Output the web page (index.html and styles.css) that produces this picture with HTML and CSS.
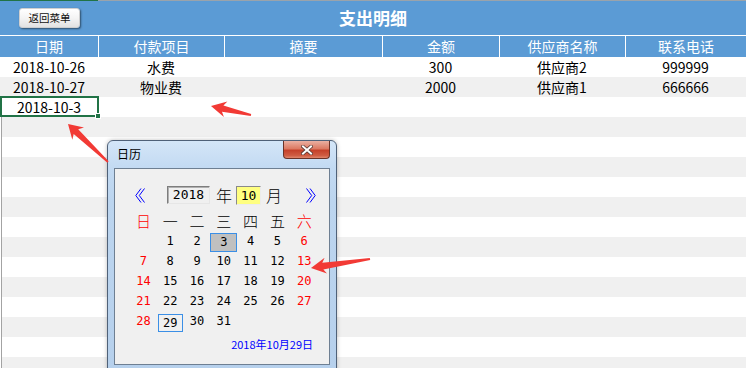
FILE: index.html
```html
<!DOCTYPE html>
<html lang="zh">
<head>
<meta charset="utf-8">
<title>支出明细</title>
<link rel="stylesheet" href="styles.css">
</head>
<body>
<div class="sheet">
  <div class="topline"><span class="topline-sel"></span></div>
  <div class="titlebar">
    <button class="back-btn">返回菜单</button>
    <h1 class="title">支出明细</h1>
    <span></span>
  </div>
  <div class="row head">
    <div>日期</div><div>付款项目</div><div>摘要</div><div>金额</div><div>供应商名称</div><div>联系电话</div>
  </div>
  <div class="row">
    <div>2018-10-26</div><div>水费</div><div></div><div>300</div><div>供应商2</div><div>999999</div>
  </div>
  <div class="row alt">
    <div>2018-10-27</div><div>物业费</div><div></div><div>2000</div><div>供应商1</div><div>666666</div>
  </div>
  <div class="row">
    <div class="sel">2018-10-3<span class="handle"></span></div><div></div><div></div><div></div><div></div><div></div>
  </div>
  <div class="blank alt"></div>
  <div class="blank"></div>
  <div class="blank alt"></div>
  <div class="blank"></div>
  <div class="blank alt"></div>
  <div class="blank"></div>
  <div class="blank alt"></div>
  <div class="blank"></div>
  <div class="blank alt"></div>
  <div class="blank"></div>
  <div class="blank alt"></div>
  <div class="blank"></div>
  <div class="blank alt"></div>
</div>

<div class="dialog">
  <div class="dlg-titlebar">
    <span class="dlg-title">日历</span>
    <span class="dlg-close">
      <svg width="12" height="10" viewBox="0 0 12 10">
        <path d="M2 1.5 L10 8.5 M10 1.5 L2 8.5" stroke="#5a3a34" stroke-width="3.6" stroke-linecap="square" fill="none"/>
        <path d="M2 1.5 L10 8.5 M10 1.5 L2 8.5" stroke="#ffffff" stroke-width="2" stroke-linecap="square" fill="none"/>
      </svg>
    </span>
  </div>
  <div class="dlg-panel">
    <div class="nav">
      <svg class="chev prev" width="10" height="15" viewBox="0 0 10 15">
        <polyline points="6,0.5 0.8,7.5 6,14.5" fill="none" stroke="#0000ff" stroke-width="1"/>
        <polyline points="9.5,0.5 4.3,7.5 9.5,14.5" fill="none" stroke="#0000ff" stroke-width="1"/>
      </svg>
      <span class="ybox">2018</span>
      <span class="unit u-year">年</span>
      <span class="mbox">10</span>
      <span class="unit u-month">月</span>
      <svg class="chev next" width="10" height="15" viewBox="0 0 10 15">
        <polyline points="0.5,0.5 5.7,7.5 0.5,14.5" fill="none" stroke="#0000ff" stroke-width="1"/>
        <polyline points="4,0.5 9.2,7.5 4,14.5" fill="none" stroke="#0000ff" stroke-width="1"/>
      </svg>
    </div>
    <div class="cal">
      <span class="wk red">日</span><span class="wk">一</span><span class="wk">二</span><span class="wk">三</span><span class="wk">四</span><span class="wk">五</span><span class="wk red">六</span>
      <span class="d"></span><span class="d">1</span><span class="d">2</span><span class="d picked">3</span><span class="d">4</span><span class="d">5</span><span class="d red">6</span>
      <span class="d red">7</span><span class="d">8</span><span class="d">9</span><span class="d">10</span><span class="d">11</span><span class="d">12</span><span class="d red">13</span>
      <span class="d red">14</span><span class="d">15</span><span class="d">16</span><span class="d">17</span><span class="d">18</span><span class="d">19</span><span class="d red">20</span>
      <span class="d red">21</span><span class="d">22</span><span class="d">23</span><span class="d">24</span><span class="d">25</span><span class="d">26</span><span class="d red">27</span>
      <span class="d red">28</span><span class="d today-box">29</span><span class="d">30</span><span class="d">31</span>
    </div>
    <div class="today">2018年10月29日</div>
  </div>
</div>

<svg class="arrows" width="746" height="368" viewBox="0 0 746 368">
  <polygon fill="#f23a35" points="68,124 84.0,127.5 78.2,129.3 108.6,161.3 107.4,162.7 73.7,133.9 72.3,139.8"/>
  <polygon fill="#f23a35" points="211,106 227.4,101.5 223.4,105.5 251.2,114.1 250.8,115.9 222.0,111.8 223.9,117.1"/>
  <polygon fill="#f23a35" points="311,268 327.0,273.6 323.4,269.6 370.2,260.0 369.8,258.0 322.3,262.7 324.6,257.8"/>
</svg>
</body>
</html>
```

FILE: styles.css
```css
* {
  box-sizing: border-box;
  margin: 0;
  padding: 0;
}

html,
body {
  width: 746px;
  height: 368px;
  overflow: hidden;
  background: #ffffff;
}

body {
  position: relative;
  font-family: "Noto Sans CJK SC", "Noto Sans", sans-serif;
  color: #000;
}

/* ---------- sheet ---------- */
.topline {
  display: flex;
  height: 1px;
  background: #9aa3ab;
}

.topline-sel {
  width: 98px;
  background: #217346;
}

.titlebar {
  display: grid;
  grid-template-columns: 1fr auto 1fr;
  align-items: center;
  height: 35px;
  background: #5b9bd5;
  border-bottom: 1px solid #ffffff;
}

.back-btn {
  justify-self: start;
  margin-left: 19px;
  width: 61px;
  height: 20px;
  font-family: "Noto Sans CJK SC", sans-serif;
  font-size: 10.5px;
  line-height: 18px;
  color: #111;
  background: linear-gradient(#ffffff, #f4f4f4 50%, #e2e2e2);
  border: 1px solid #cfcfcf;
  border-radius: 3px;
  box-shadow: 1px 1px 2px rgba(0, 0, 0, 0.5);
}

.title {
  font-size: 17px;
  font-weight: bold;
  line-height: 22px;
  color: #ffffff;
}

.row {
  display: grid;
  grid-template-columns: 98px 126px 158px 117px 126px 1fr;
  height: 20px;
}

.row > div {
  text-align: center;
  font-size: 14px;
  line-height: 20px;
  white-space: nowrap;
}

.head {
  height: 21px;
  background: #5b9bd5;
}

.head > div {
  color: #ffffff;
  line-height: 21px;
}

.head > div + div {
  border-left: 1px solid #ffffff;
}

.alt {
  background: #f0f0f0;
}

.blank {
  height: 20px;
  margin-left: 1px;
  border-left: 1px solid #a3a3a3;
}

.sel {
  position: relative;
}

.sel::before {
  content: "";
  position: absolute;
  top: -1px;
  left: 0;
  right: -1px;
  bottom: 0;
  border: 2px solid #217346;
}

.handle {
  position: absolute;
  right: -3px;
  bottom: -2px;
  width: 6px;
  height: 6px;
  background: #217346;
  border: 1px solid #ffffff;
}

/* ---------- calendar dialog ---------- */
.dialog {
  position: absolute;
  left: 107px;
  top: 140px;
  width: 230px;
  height: 240px;
  padding: 0 6px;
  border: 1px solid #4f6178;
  border-radius: 6px 6px 0 0;
  background: linear-gradient(to bottom, #d4e6f8 0, #c3daf2 26px, #bcd5ef 60px, #b6d0ec 100%);
  box-shadow: 0 0 4px rgba(0, 0, 0, 0.25);
  z-index: 5;
}

.dlg-titlebar {
  display: flex;
  justify-content: space-between;
  align-items: flex-start;
  height: 27px;
}

.dlg-title {
  margin-left: 3px;
  margin-top: 5px;
  font-size: 12px;
  line-height: 16px;
}

.dlg-close {
  display: flex;
  align-items: center;
  justify-content: center;
  width: 47px;
  height: 18px;
  border: 1px solid #6a3328;
  border-top: none;
  border-radius: 0 0 4px 4px;
  background: linear-gradient(#eab0a2, #dc7a63 45%, #c5412a 55%, #cf5c42 85%, #e0866c);
}

.dlg-panel {
  height: 197px;
  border: 1px solid #6e7f92;
  background: #f0f0f0;
}

.nav {
  display: flex;
  align-items: center;
  height: 20px;
  margin-top: 16px;
}

.chev.prev {
  margin-left: 20px;
}

.ybox {
  margin-left: 22px;
  width: 43px;
  height: 18px;
  font-family: "DejaVu Sans Mono", monospace;
  font-size: 13px;
  line-height: 16px;
  text-align: center;
  background: #f0f0f0;
  border: 1px solid;
  border-color: #7d7d7d #e6e6e6 #e6e6e6 #7d7d7d;
  box-shadow: inset 1px 1px 0 #b0b0b0;
}

.unit {
  font-size: 16px;
  font-weight: 300;
  line-height: 20px;
}

.u-year {
  margin-left: 6px;
}

.mbox {
  margin-left: 4px;
  width: 25px;
  height: 19px;
  font-family: "DejaVu Sans Mono", monospace;
  font-size: 13px;
  line-height: 17px;
  text-align: center;
  background: #ffff80;
  border: 1px solid;
  border-color: #8a8a8a #ececec #ececec #8a8a8a;
}

.u-month {
  margin-left: 5px;
}

.chev.next {
  margin-left: 24px;
}

.cal {
  display: grid;
  grid-template-columns: repeat(7, 26.8px);
  grid-auto-rows: 20px;
  margin-top: 6px;
  margin-left: 15px;
}

.wk {
  font-size: 15px;
  font-weight: 300;
  line-height: 20px;
  text-align: center;
}

.d {
  font-family: "DejaVu Sans Mono", monospace;
  font-size: 12px;
  line-height: 20px;
  text-align: center;
}

.red {
  color: #ff0000;
}

.picked {
  margin-top: 2px;
  height: 19px;
  line-height: 17px;
  background: #c0c0c0;
  border: 1px solid #3b8fe6;
}

.today-box {
  margin-top: 3px;
  margin-left: 1px;
  width: 25px;
  height: 18px;
  line-height: 16px;
  border: 1px solid #3b8fe6;
}

.today {
  margin-top: 6px;
  padding-right: 16px;
  text-align: right;
  font-size: 11px;
  line-height: 14px;
  color: #0000ff;
}

/* ---------- annotation arrows ---------- */
.arrows {
  position: absolute;
  left: 0;
  top: 0;
  z-index: 10;
  pointer-events: none;
}
```
